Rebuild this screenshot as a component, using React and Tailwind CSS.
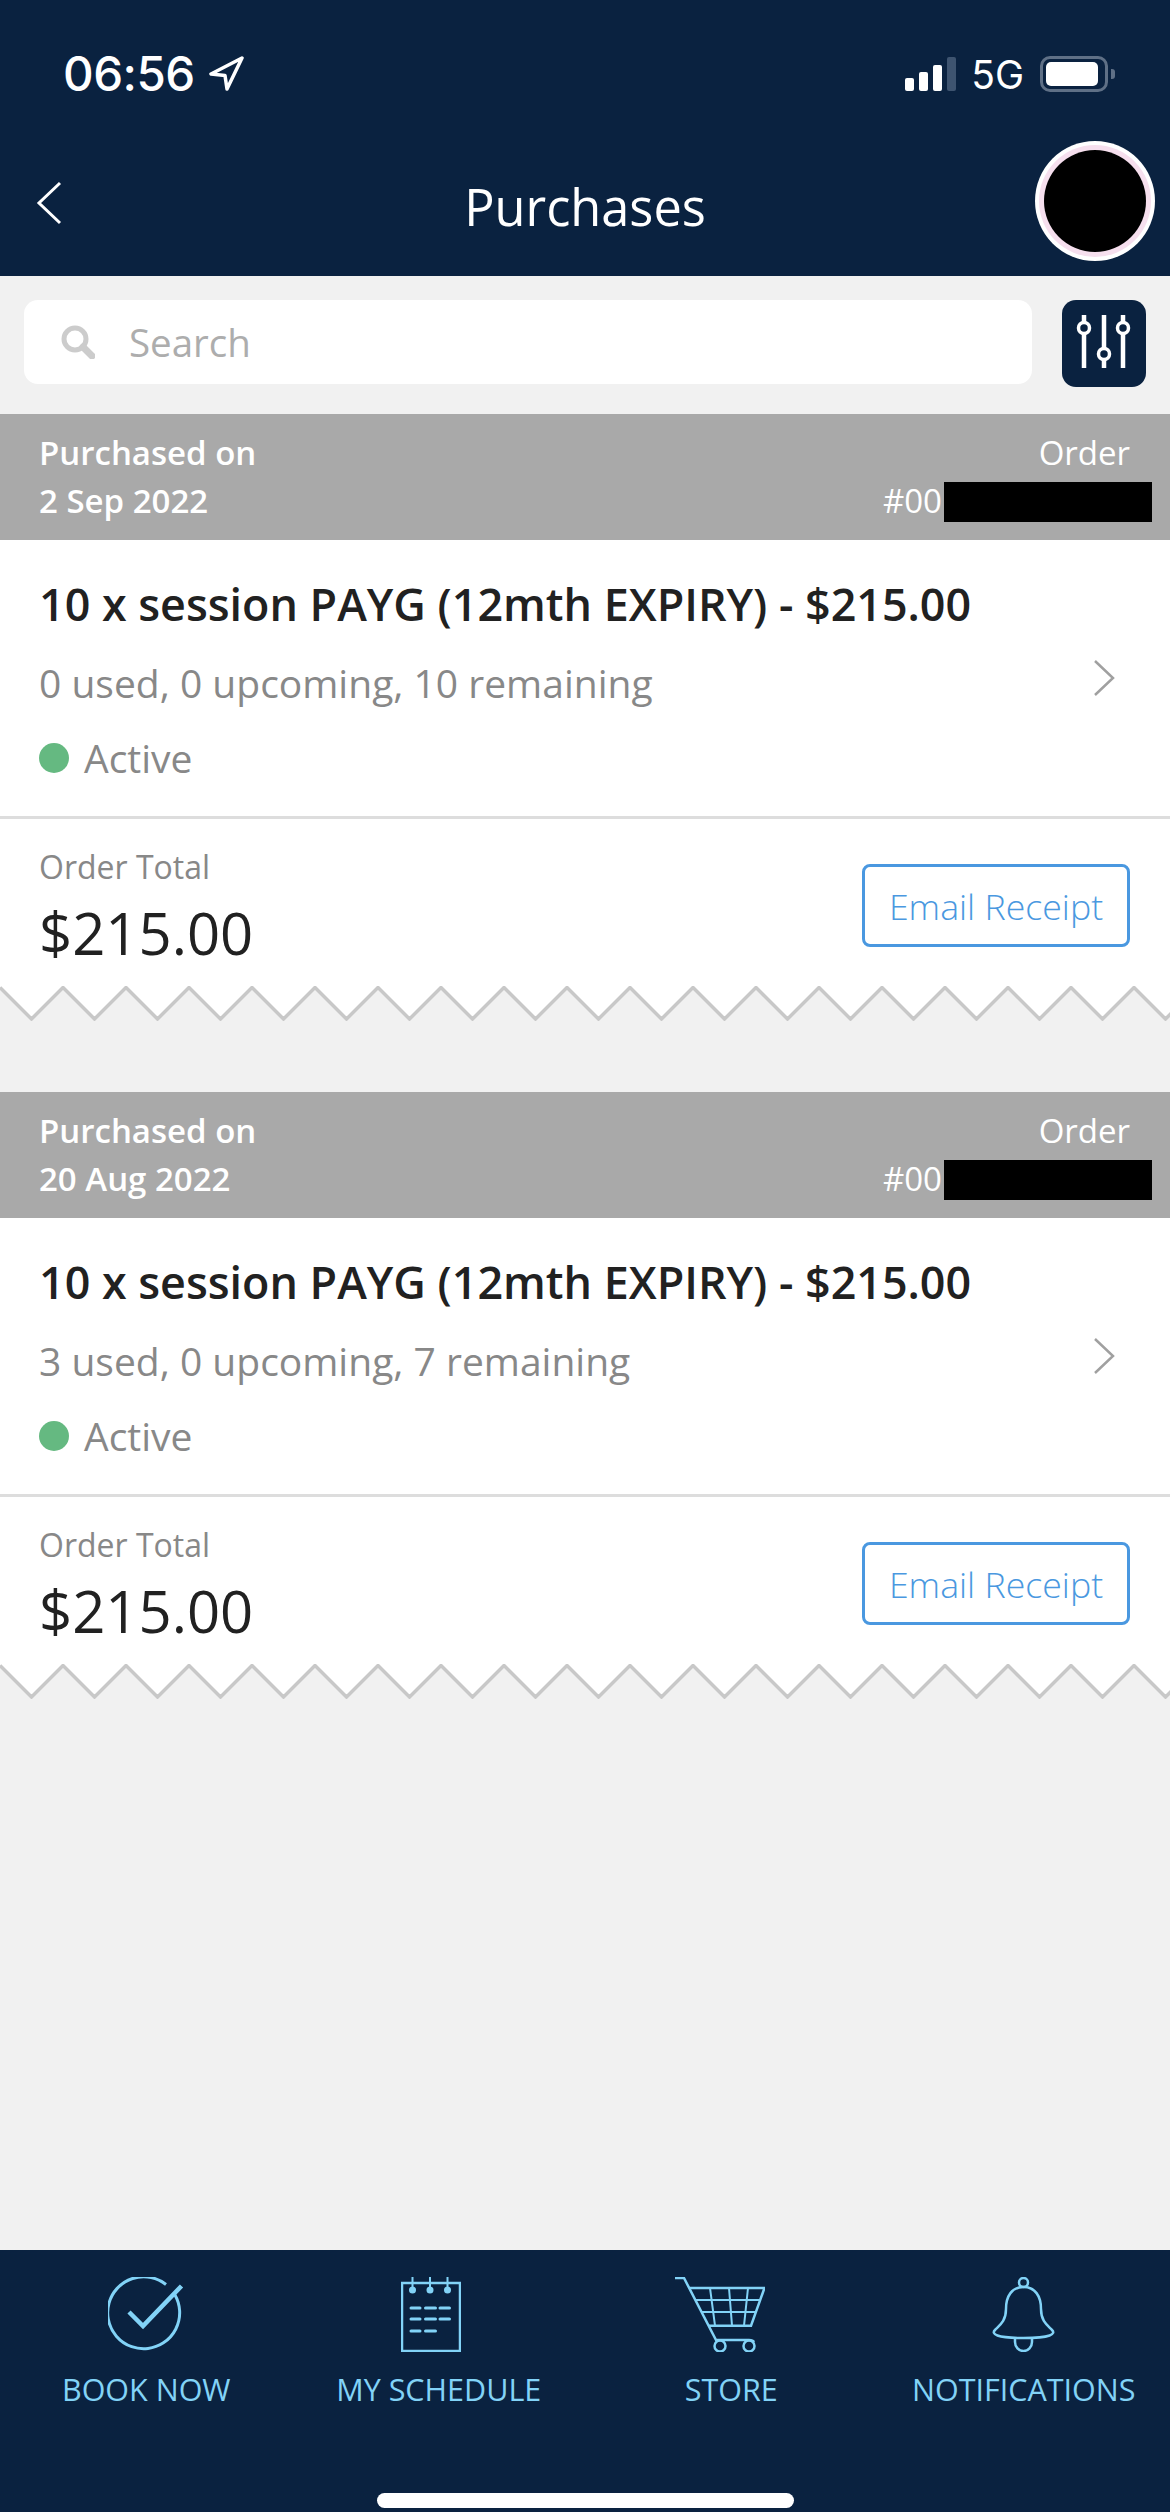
import React from 'react';

const NAVY = 'bg-[#0a2240]';

const StatusBar = () => (
  <div className="flex items-center justify-between h-[44px] mt-[52px] pl-[63px] pr-[55px] text-white">
    <div className="flex items-center gap-[13px]">
      <span className="font-['Inter',sans-serif] font-medium text-[47.5px] leading-none tracking-[-0.5px]">06:56</span>
      <svg width="36" height="36" viewBox="0 0 36 36" fill="none" stroke="white" strokeWidth="3.5" strokeLinejoin="round">
        <path d="M34 2L3 18l14 1.500L19 33z" />
      </svg>
    </div>
    <div className="flex items-center">
      <div className="flex items-end gap-[5px] h-[34px] mr-[15px]">
        <div className="w-[9px] h-[13px] rounded-[2px] bg-white" />
        <div className="w-[9px] h-[19px] rounded-[2px] bg-white" />
        <div className="w-[9px] h-[26px] rounded-[2px] bg-white" />
        <div className="w-[9px] h-[34px] rounded-[2px] bg-[#3e5470]" />
      </div>
      <span className="font-['Inter',sans-serif] text-[39px] leading-none mr-[16px]">5G</span>
      <div className="flex items-center">
        <div className="w-[68px] h-[36px] rounded-[10px] border-[3px] border-[#5f7086] p-[3px]">
          <div className="h-full w-[52px] rounded-[5px] bg-white" />
        </div>
        <div className="w-[4px] h-[10px] ml-[3px] rounded-r-[3px] bg-[#5f7086]" />
      </div>
    </div>
  </div>
);

const TitleBar = () => (
  <div className="relative flex items-center justify-between h-[120px] mt-[45px] pl-[36px] pr-[15px]">
    <svg className="mt-[4px]" width="26" height="44" viewBox="0 0 26 44" fill="none" stroke="white" strokeWidth="3">
      <path d="M24 2L3 22l21 20" />
    </svg>
    <h1 className="absolute left-0 right-0 text-center font-['Open_Sans',sans-serif] text-white text-[50.5px] leading-none pt-[12px]">Purchases</h1>
    <div className="w-[120px] h-[120px] rounded-full bg-white p-[4px]">
      <div className="w-full h-full rounded-full bg-[#f6dfee] p-[5px]">
        <div className="w-full h-full rounded-full bg-black" />
      </div>
    </div>
  </div>
);

const SearchRow = () => (
  <div className="flex justify-between pt-[24px] pb-[27px] pl-[24px] pr-[24px]">
    <div className="flex items-center w-[1008px] h-[84px] rounded-[14px] bg-white pl-[37px]">
      <svg width="34" height="34" viewBox="0 0 34 34" fill="none" stroke="#cccccc">
        <circle cx="14" cy="14" r="11" strokeWidth="5" />
        <path d="M22 22l9 9" strokeWidth="7" strokeLinecap="round" />
      </svg>
      <span className="ml-[34px] font-['Open_Sans',sans-serif] text-[38.5px] leading-none text-[#adadad]">Search</span>
    </div>
    <div className={`w-[84px] h-[87px] rounded-[14px] ${NAVY}`}>
      <svg width="84" height="87" viewBox="0 0 84 87" fill="none" stroke="white" strokeWidth="4.5">
        <path d="M22 15v53M42 15v53M61 15v53" />
        <circle cx="22" cy="28" r="5.5" fill="#0a2240" strokeWidth="3.5" />
        <circle cx="42" cy="54" r="5.5" fill="#0a2240" strokeWidth="3.5" />
        <circle cx="61" cy="28" r="5.5" fill="#0a2240" strokeWidth="3.5" />
      </svg>
    </div>
  </div>
);

const zigzag = () => {
  const pts = [];
  for (let i = 0; i <= 38; i++) pts.push(`${i * 31.5},${i % 2 === 0 ? 1.5 : 33}`);
  return pts.join(' ');
};

const Zigzag = () => (
  <svg className="block" width="1170" height="35" viewBox="0 0 1170 35">
    <polygon points={`0,0 ${zigzag()} 1170,0`} fill="white" />
    <polyline points={zigzag()} fill="none" stroke="#c8c8c8" strokeWidth="3.5" />
  </svg>
);

const OrderCard = ({ date, usage }) => (
  <section className="font-['Open_Sans',sans-serif]">
    <div className="flex justify-between h-[126px] bg-[#a9a9a9] pl-[39px] pr-[40px] pt-[15px] text-white text-[33px] leading-[48px]">
      <div>
        <div className="font-semibold">Purchased on</div>
        <div className="font-semibold">{date}</div>
      </div>
      <div className="flex flex-col items-end">
        <div>Order</div>
        <div className="relative pr-[188px]">
          #00
          <div className="absolute left-[61px] top-[5px] w-[208px] h-[40px] bg-black" />
        </div>
      </div>
    </div>
    <div className="relative h-[279px] bg-white border-b-[3px] border-[#dddddd] pl-[39px] pt-[36px]">
      <div className="text-[44.85px] leading-[56px] font-semibold text-[#212121]">10 x session PAYG (12mth EXPIRY) - $215.00</div>
      <div className="mt-[23px] text-[39px] leading-[56px] text-[#888888]">{usage}</div>
      <div className="flex items-center mt-[22px]">
        <div className="w-[30px] h-[30px] rounded-full bg-[#65b981]" />
        <span className="ml-[15px] text-[39px] leading-[50px] text-[#888888]">Active</span>
      </div>
      <svg className="absolute left-[1093px] top-[120px]" width="22" height="36" viewBox="0 0 22 36" fill="none" stroke="#a0a0a0" strokeWidth="2.5">
        <path d="M2 1l18 17L2 35" />
      </svg>
    </div>
    <div className="flex justify-between h-[167px] bg-white pl-[39px] pr-[40px]">
      <div className="pt-[26px]">
        <div className="text-[32px] leading-[44px] text-[#888888]">Order Total</div>
        <div className="mt-[8px] text-[58px] leading-[72px] text-[#212121]">$215.00</div>
      </div>
      <div className="flex items-center justify-center w-[268px] h-[83px] mt-[45px] pt-[2px] rounded-[8px] border-[3px] border-[#4a98e0] text-[35.7px] font-light leading-none text-[#4a98e0]">Email Receipt</div>
    </div>
    <Zigzag />
  </section>
);

const CheckIcon = () => (
  <svg width="76" height="75" viewBox="0 0 76 75" fill="none" stroke="#82d3f7">
    <path d="M67 18A36 36 0 1 1 58 7.500" strokeWidth="3" />
    <path d="M21 35l14 14L73.500 9" strokeWidth="4.500" />
  </svg>
);

const ScheduleIcon = () => (
  <svg width="60" height="75" viewBox="0 0 60 75" fill="none" stroke="#82d3f7">
    <rect x="1" y="6" width="58" height="68" strokeWidth="2.500" />
    <path d="M11.500 0v13M29 0v13M46.500 0v13" strokeWidth="2" />
    <circle cx="11.500" cy="13" r="3.500" fill="#82d3f7" stroke="none" />
    <circle cx="29" cy="13" r="3.500" fill="#82d3f7" stroke="none" />
    <circle cx="46.500" cy="13" r="3.500" fill="#82d3f7" stroke="none" />
    <path d="M10 31h9M24.500 31h10M39 31h9.500M10 42h9M24.500 42h10M39 42h9.500M10 54h9M24.500 54h10" strokeWidth="3" strokeLinecap="round" />
  </svg>
);

const CartIcon = () => (
  <svg width="90" height="75" viewBox="0 0 90 75" fill="none" stroke="#82d3f7">
    <path d="M0 1h9l32 62h33q4 0 5 2" strokeWidth="2.500" />
    <path d="M14 11h75.500L76 48.700H33.500" strokeWidth="2.500" />
    <path d="M21 23h64M27 35h54M35 11l5 37.700M54 11l3 37.700M73 11l-4 37.700" strokeWidth="2" />
    <circle cx="45" cy="69" r="5.500" strokeWidth="2.500" />
    <circle cx="74" cy="69" r="5.500" strokeWidth="2.500" />
  </svg>
);

const BellIcon = () => (
  <svg width="63" height="75" viewBox="0 0 63 75" fill="none" stroke="#82d3f7" strokeWidth="2.500">
    <circle cx="31.500" cy="5.500" r="4.500" />
    <path d="M31.500 10C20 10 14 19 14 32C14 44 8 48 3 53C-1 57 4 61 31.500 61C59 61 64 57 60 53C55 48 49 44 49 32C49 19 43 10 31.500 10Z" />
    <path d="M23 61v4a8.500 9 0 0 0 17 0v-4" />
  </svg>
);

const tabs = [
  { label: 'BOOK NOW', Icon: CheckIcon, iconClass: '' },
  { label: 'MY SCHEDULE', Icon: ScheduleIcon, iconClass: 'mr-[16px]' },
  { label: 'STORE', Icon: CartIcon, iconClass: 'mr-[22px]' },
  { label: 'NOTIFICATIONS', Icon: BellIcon, iconClass: '' },
];

const BottomNav = () => (
  <nav className={`relative h-[262px] pt-[27px] ${NAVY}`}>
    <div className="grid grid-cols-4">
      {tabs.map(({ label, Icon, iconClass }) => (
        <div key={label} className="flex flex-col items-center">
          <div className={`h-[75px] ${iconClass}`}><Icon /></div>
          <span className="mt-[16px] font-['Open_Sans',sans-serif] font-medium text-[30.5px] leading-[42px] text-[#82d3f7]">{label}</span>
        </div>
      ))}
    </div>
    <div className="absolute left-[377px] bottom-[4px] w-[417px] h-[15px] rounded-full bg-white" />
  </nav>
);

export default function App() {
  return (
    <div className="flex flex-col w-[1170px] h-[2512px] bg-[#f1f1f1] overflow-hidden">
      <header className={`h-[276px] shrink-0 ${NAVY}`}>
        <StatusBar />
        <TitleBar />
      </header>
      <SearchRow />
      <div className="flex flex-col gap-[71px]">
        <OrderCard date="2 Sep 2022" usage="0 used, 0 upcoming, 10 remaining" />
        <OrderCard date="20 Aug 2022" usage="3 used, 0 upcoming, 7 remaining" />
      </div>
      <div className="flex-1" />
      <BottomNav />
    </div>
  );
}
